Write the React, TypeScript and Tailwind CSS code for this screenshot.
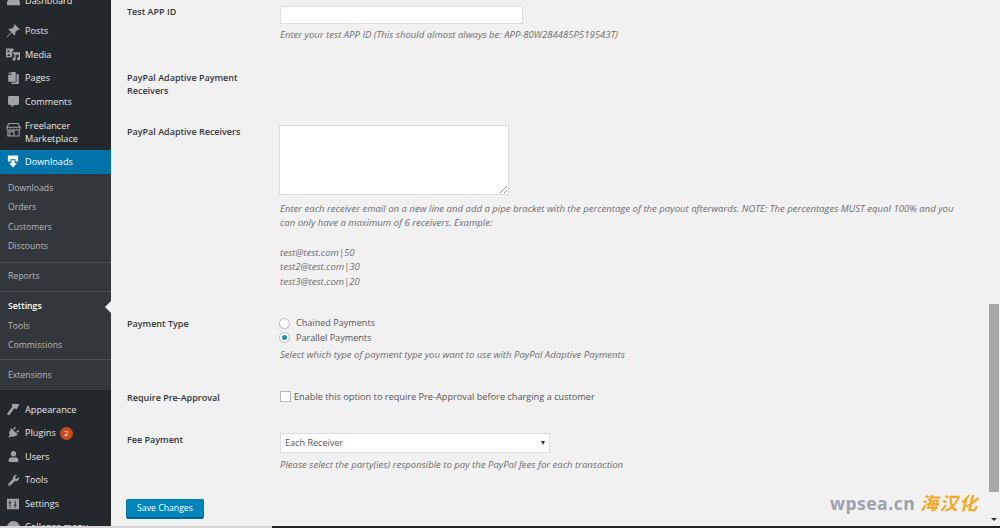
import { ReactNode } from "react";
import { FaCopy, FaCommentAlt, FaPlug, FaUser, FaWrench } from "react-icons/fa";

const PinIcon = () => (
  <svg viewBox="0 0 14 14" className="w-[14px] h-[14px]" fill="currentColor">
    <path d="M8.500 0 14 5.500l-1.200.6-1-.4L9.200 8.300c.5 1.300.2 2.400-.6 3.200L5.800 8.700 1 13.500l-.5-.5 4.800-4.800L2.500 5.400c.8-.8 1.900-1.100 3.200-.6l2.600-2.600-.4-1z" />
  </svg>
);

const MediaIcon = () => (
  <svg viewBox="0 0 16 14" className="w-[14px] h-[13px]" fill="currentColor">
    <path fillRule="evenodd" d="M0 0h8.500v3.500H7V9h-.500v1H0zM2.800 2a1.200 1.200 0 1 0 0 2.400 1.200 1.200 0 0 0 0-2.400zM1.200 8.800h4L3.200 6z" />
    <path d="M8 4.500h8v7.300a1.800 1.800 0 1 1-1.500-1.700V7l-3.500.7v4.600a1.800 1.800 0 1 1-1.500-1.700V6.400H8z" />
  </svg>
);

const StoreIcon = () => (
  <svg viewBox="0 0 16 16" className="w-[15px] h-[15px]" fill="none" stroke="currentColor" strokeWidth="1.100">
    <path d="M3 1.500h10l2 4H1z" />
    <path d="M1 5.500v1.600a1.700 1.700 0 0 0 3.500 0 1.700 1.700 0 0 0 3.500 0 1.700 1.700 0 0 0 3.500 0 1.700 1.700 0 0 0 3.500 0V5.500" />
    <path d="M2 9v6h12V9M2 10.500h6.500M8.500 9v6M4 10.500V15" />
  </svg>
);

const DownloadIcon = () => (
  <svg viewBox="0 0 14 14" className="w-[12px] h-[13px]" fill="currentColor">
    <path d="M1 0h12v7H10V4.500H4V7H1z" />
    <path d="M5 5.500h4V9h2.500L7 14 2.500 9H5z" />
  </svg>
);

const BrushIcon = () => (
  <svg viewBox="0 0 16 14" className="w-[14px] h-[13px]" fill="currentColor">
    <path d="M7 .5 15.500 1 12 7 9.500 5.500 3.500 13.500 1 12l6-8z" />
  </svg>
);

const SlidersIcon = () => (
  <svg viewBox="0 0 14 14" className="w-[12px] h-[12px]" fill="currentColor">
    <path fillRule="evenodd" d="M0 1h14v12H0zM3 3v2H2v1h1v5h1V6h1V5H4V3zm6 0v5H8v1h1v2h1V9h1V8h-1V3z" />
  </svg>
);

const CollapseIcon = () => (
  <svg viewBox="0 0 14 14" className="w-[13px] h-[13px]" fill="currentColor">
    <circle cx="7" cy="7" r="7" />
  </svg>
);

const DashIcon = () => (
  <svg viewBox="0 0 14 14" className="w-[13px] h-[13px]" fill="currentColor">
    <path d="M0 10a7 7 0 0 1 14 0v2H0z" />
  </svg>
);

const MenuItem = ({ icon, label, top }: { icon: ReactNode; label: ReactNode; top?: boolean }) => (
  <div className={`flex items-center text-[#e6e7e8] ${top ? "h-[23.5px] -mt-[11px] mb-[7px]" : "h-[23.5px]"}`}>
    <span className="w-[25px] flex justify-center pl-[1px] text-[#9ea3a8] text-[13px] shrink-0">{icon}</span>
    <span>{label}</span>
  </div>
);

const SubItem = ({ label, current }: { label: string; current?: boolean }) => (
  <div className={`relative h-[19.5px] flex items-center pl-[8px] text-[8.7px] ${current ? "text-white font-semibold" : "text-[#b4b9be]"}`}>
    {label}
    {current && (
      <span className="absolute right-0 top-[4px] border-y-[6px] border-r-[6px] border-y-transparent border-r-[#f1f1f1]" />
    )}
  </div>
);

const Sidebar = () => (
  <aside className="w-[111px] shrink-0 h-[528px] overflow-hidden bg-[#23282d] text-[9.2px]">
    <MenuItem top icon={<DashIcon />} label="Dashboard" />
    <MenuItem icon={<PinIcon />} label="Posts" />
    <MenuItem icon={<MediaIcon />} label="Media" />
    <MenuItem icon={<FaCopy className="w-[11px] h-[12px] -scale-x-100" />} label="Pages" />
    <MenuItem icon={<FaCommentAlt className="w-[11px] h-[11px]" />} label="Comments" />
    <div className="flex items-center h-[36px] text-[#e6e7e8] leading-[13px]">
      <span className="w-[25px] flex justify-center pl-[1px] -mt-[4px] text-[#9ea3a8] shrink-0">
        <StoreIcon />
      </span>
      <span>
        Freelancer
        <br />
        Marketplace
      </span>
    </div>
    <div className="flex items-center h-[24px] bg-[#0073aa] text-white">
      <span className="w-[25px] flex justify-center pl-[1px] shrink-0">
        <DownloadIcon />
      </span>
      <span>Downloads</span>
    </div>
    <div className="bg-[#32373c] pt-[5px] pb-[5px]">
      <SubItem label="Downloads" />
      <SubItem label="Orders" />
      <SubItem label="Customers" />
      <SubItem label="Discounts" />
      <div className="h-px bg-[#4a4f54] mt-[5px] mb-[4px]" />
      <SubItem label="Reports" />
      <div className="h-px bg-[#4a4f54] mt-[5px] mb-[5px]" />
      <SubItem label="Settings" current />
      <SubItem label="Tools" />
      <SubItem label="Commissions" />
      <div className="h-px bg-[#4a4f54] mt-[3px] mb-[6px]" />
      <SubItem label="Extensions" />
    </div>
    <div className="h-[8px]" />
    <MenuItem icon={<BrushIcon />} label="Appearance" />
    <MenuItem
      icon={<FaPlug className="w-[12px] h-[12px] rotate-45" />}
      label={
        <span className="flex items-center gap-[4px]">
          Plugins
          <span className="w-[13px] h-[13px] rounded-full bg-[#ca4a1f] text-white text-[7.5px] flex items-center justify-center">
            2
          </span>
        </span>
      }
    />
    <MenuItem icon={<FaUser className="w-[11px] h-[11px]" />} label="Users" />
    <MenuItem icon={<FaWrench className="w-[11px] h-[11px]" />} label="Tools" />
    <MenuItem icon={<SlidersIcon />} label="Settings" />
    <MenuItem icon={<CollapseIcon />} label="Collapse menu" />
  </aside>
);

const Row = ({ label, className, children }: { label?: ReactNode; className?: string; children?: ReactNode }) => (
  <div className={`flex ${className ?? ""}`}>
    <div className="w-[153px] shrink-0 font-semibold text-[9px] text-[#32373c] leading-[13.5px]">{label}</div>
    <div className="min-w-0 flex-1">{children}</div>
  </div>
);

const Hint = ({ children, className }: { children: ReactNode; className?: string }) => (
  <p className={`italic text-[#6e6e6e] leading-[14.5px] ${className ?? ""}`}>{children}</p>
);

const Radio = ({ label, checked }: { label: string; checked?: boolean }) => (
  <div className="flex items-center h-[14.5px] gap-[6px] -ml-[1px] text-[9.1px] text-[#555555]">
    <span className="w-[11px] h-[11px] rounded-full border border-[#b4b9be] bg-white flex items-center justify-center shrink-0">
      {checked && <span className="w-[5px] h-[5px] rounded-full bg-[#1e8cbe]" />}
    </span>
    {label}
  </div>
);

export default function App() {
  return (
    <div
      className="relative flex w-[1000px] h-[528px] overflow-hidden bg-[#f1f1f1] text-[9.55px]"
      style={{ fontFamily: '"Open Sans", "Noto Sans CJK SC", sans-serif' }}
    >
      <Sidebar />
      <main className="flex-1 pl-[16px] pr-[36px]">
        <Row label="Test APP ID" className="mt-[5px]">
          <input readOnly className="block w-[243px] h-[18px] mt-[1px] bg-white border border-[#dddddd] outline-none" />
          <Hint className="mt-[4px]">Enter your test APP ID (This should almost always be: APP-80W284485P519543T)</Hint>
        </Row>
        <Row
          label={
            <>
              PayPal Adaptive Payment
              <br />
              Receivers
            </>
          }
          className="mt-[28px]"
        />
        <Row label="PayPal Adaptive Receivers" className="mt-[27px]">
          <div className="relative w-[230px] h-[70px] -ml-[1px] bg-white border border-[#dddddd]">
            <svg viewBox="0 0 7 7" className="absolute right-[1px] bottom-[1px] w-[7px] h-[7px]" stroke="#666666" strokeWidth="0.7">
              <path d="M0 7 7 0M4 7l3-3" />
            </svg>
          </div>
          <Hint className="mt-[7px]">
            Enter each receiver email on a new line and add a pipe bracket with the percentage of the payout afterwards. NOTE: The
            percentages MUST equal 100% and you can only have a maximum of 6 receivers. Example:
          </Hint>
          <Hint className="mt-[15px]">test@test.com|50</Hint>
          <Hint>test2@test.com|30</Hint>
          <Hint>test3@test.com|20</Hint>
        </Row>
        <Row label="Payment Type" className="mt-[28px]">
          <div className="-mt-[1px]">
            <Radio label="Chained Payments" />
            <Radio label="Parallel Payments" checked />
          </div>
          <Hint className="mt-[3px]">Select which type of payment type you want to use with PayPal Adaptive Payments</Hint>
        </Row>
        <Row label="Require Pre-Approval" className="mt-[28px]">
          <div className="flex items-center gap-[3px] -mt-[1px] text-[9.2px] text-[#555555]">
            <span className="w-[11px] h-[11px] bg-white border border-[#b4b9be]" />
            Enable this option to require Pre-Approval before charging a customer
          </div>
        </Row>
        <Row label="Fee Payment" className="mt-[29px]">
          <div className="relative flex items-center w-[270px] h-[20px] pl-[4px] bg-white border border-[#dddddd] text-[9.1px] text-[#555555]">
            Each Receiver
            <span className="absolute right-[4px] top-[7px] border-x-[2.5px] border-t-[4px] border-x-transparent border-t-[#333333]" />
          </div>
          <Hint className="mt-[5px]">Please select the party(ies) responsible to pay the PayPal fees for each transaction</Hint>
        </Row>
        <button className="block w-[78px] h-[20px] pt-[1px] mt-[26px] -ml-[1px] rounded-[2px] bg-[#0085ba] border border-[#0079a8] border-b-2 border-b-[#006799] text-white text-[8.7px]">
          Save Changes
        </button>
      </main>
      <div className="absolute right-[1px] top-[304px] w-[10px] h-[188px] bg-[#a8a8a8]" />
      <span className="absolute right-[3px] top-[518px] border-x-[3px] border-t-[3px] border-x-transparent border-t-[#333333]" />
      <div className="absolute left-[830px] top-[491px] flex items-center gap-[5px] leading-[24px]">
        <span className="text-[17.5px] font-bold text-[#9aa3ae] tracking-[0.5px]">wpsea.cn</span>
        <span className="text-[18px] italic font-bold tracking-[1.5px] text-[#f5a623]">海汉化</span>
      </div>
      <div className="absolute left-0 bottom-0 w-[272px] h-[2px] bg-[#d5d5d5]" />
      <div className="absolute left-[272px] right-0 bottom-0 h-[2px] bg-[#222222]" />
    </div>
  );
}
